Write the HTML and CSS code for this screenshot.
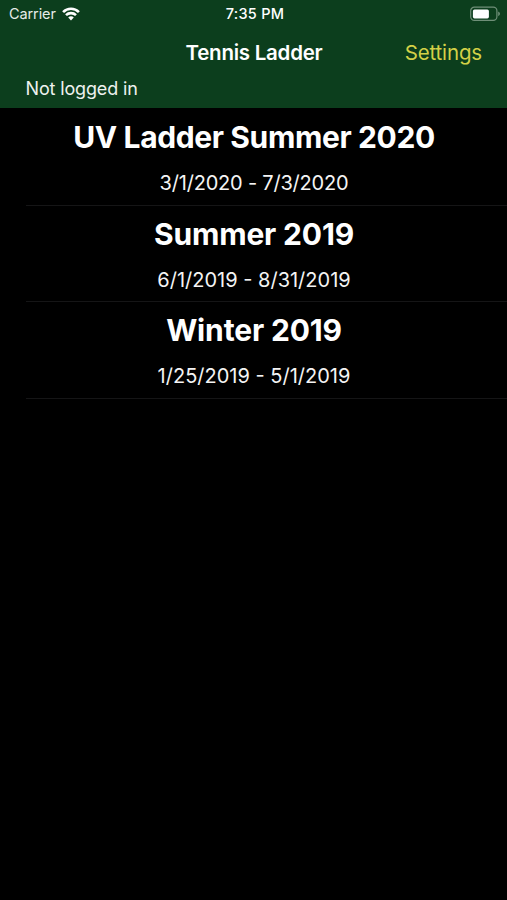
FILE: index.html
```html
<!DOCTYPE html>
<html>
	<head>
		<meta charset="UTF-8">
		<title>Tennis Ladder</title>
		<link rel="stylesheet" href="styles.css">
	</head>
	<body>
		<header class="top">
			<!-- status bar -->
			<div class="status">
				<div class="carrier">
					<span>Carrier</span>
					<svg class="wifi" width="18" height="14" viewBox="0 0 18 14" fill="none" stroke="#fff" stroke-width="2.6">
						<path d="M1.1 5.1C5.5 .6 12.5 .6 16.9 5.1"/>
						<path d="M4 8.1C6.8 5.4 11.2 5.4 14 8.1"/>
						<path d="M6.2 10.4C7.8 8.9 10.2 8.9 11.8 10.4L9 13.4Z" fill="#fff" stroke="none"/>
					</svg>
				</div>
				<div class="time">7:35 PM</div>
				<svg class="battery" width="31" height="16" viewBox="0 0 31 16">
					<rect x=".7" y="1.2" width="26.2" height="13.2" rx="3.6" fill="none" stroke="#6f8f78" stroke-width="1.2"/>
					<rect x="2.9" y="3.4" width="16" height="9" rx="1.6" fill="#fff"/>
					<path d="M28.2 5.4Q30 6.3 30 7.8T28.2 10.2Z" fill="#6f8f78"/>
				</svg>
			</div>
			<!-- nav bar -->
			<nav class="nav">
				<h1 class="title">Tennis Ladder</h1>
				<a class="settings">Settings</a>
			</nav>
			<p class="login">Not logged in</p>
		</header>
		<ul class="ladders">
			<li class="ladder">
				<h2 class="name long">UV Ladder Summer 2020</h2>
				<p class="dates tight">3/1/2020 - 7/3/2020</p>
			</li>
			<li class="ladder">
				<h2 class="name">Summer 2019</h2>
				<p class="dates">6/1/2019 - 8/31/2019</p>
			</li>
			<li class="ladder">
				<h2 class="name">Winter 2019</h2>
				<p class="dates">1/25/2019 - 5/1/2019</p>
			</li>
		</ul>
	</body>
</html>
```
FILE: styles.css
```css
*{
	box-sizing: border-box;
}
body{
	margin: 0;
	min-height: 100vh;
	background: #000;
	color: #fff;
	font-family: Inter, "Liberation Sans", sans-serif;
}
h1,h2,p,ul{
	margin: 0;
	padding: 0;
}
.top{
	height: 108px;
	background: #0c3e1d;
}
.status{
	display: grid;
	grid-template-columns: 1fr auto 1fr;
	align-items: center;
	height: 27px;
	padding: 0 6px 0 9px;
}
.carrier{
	display: flex;
	align-items: center;
	gap: 6px;
	font-size: 14.5px;
	letter-spacing: -0.1px;
	color: #e6ece8;
}
.time{
	font-size: 14.5px;
	font-weight: 500;
	letter-spacing: 0.25px;
}
.battery{
	justify-self: end;
}
.nav{
	display: grid;
	grid-template-columns: 1fr auto 1fr;
	align-items: center;
	height: 50px;
	padding: 0 25px 0 26px;
}
.title{
	grid-column: 2;
	font-size: 20.5px;
	font-weight: 600;
	letter-spacing: -0.25px;
}
.settings{
	justify-self: end;
	color: #d3d147;
	font-size: 20.5px;
	letter-spacing: -0.15px;
}
.login{
	padding-left: 25.5px;
	font-size: 18px;
	line-height: 23px;
	letter-spacing: -0.15px;
	color: #eef2ef;
}
.ladders{
	padding-top: 1px;
	list-style: none;
}
.ladder{
	height: 96.5px;
	margin-left: 26px;
	padding: 8px 25px 0 0;
	border-bottom: 1px solid #151516;
	text-align: center;
}
.name{
	font-size: 30px;
	font-weight: 700;
	line-height: 40px;
	letter-spacing: -0.15px;
}
.long{
	letter-spacing: -0.37px;
}
.dates{
	margin-top: 13px;
	font-size: 20px;
	line-height: 26px;
	color: #f4f4f4;
}
.tight{
	letter-spacing: -0.2px;
}
```
